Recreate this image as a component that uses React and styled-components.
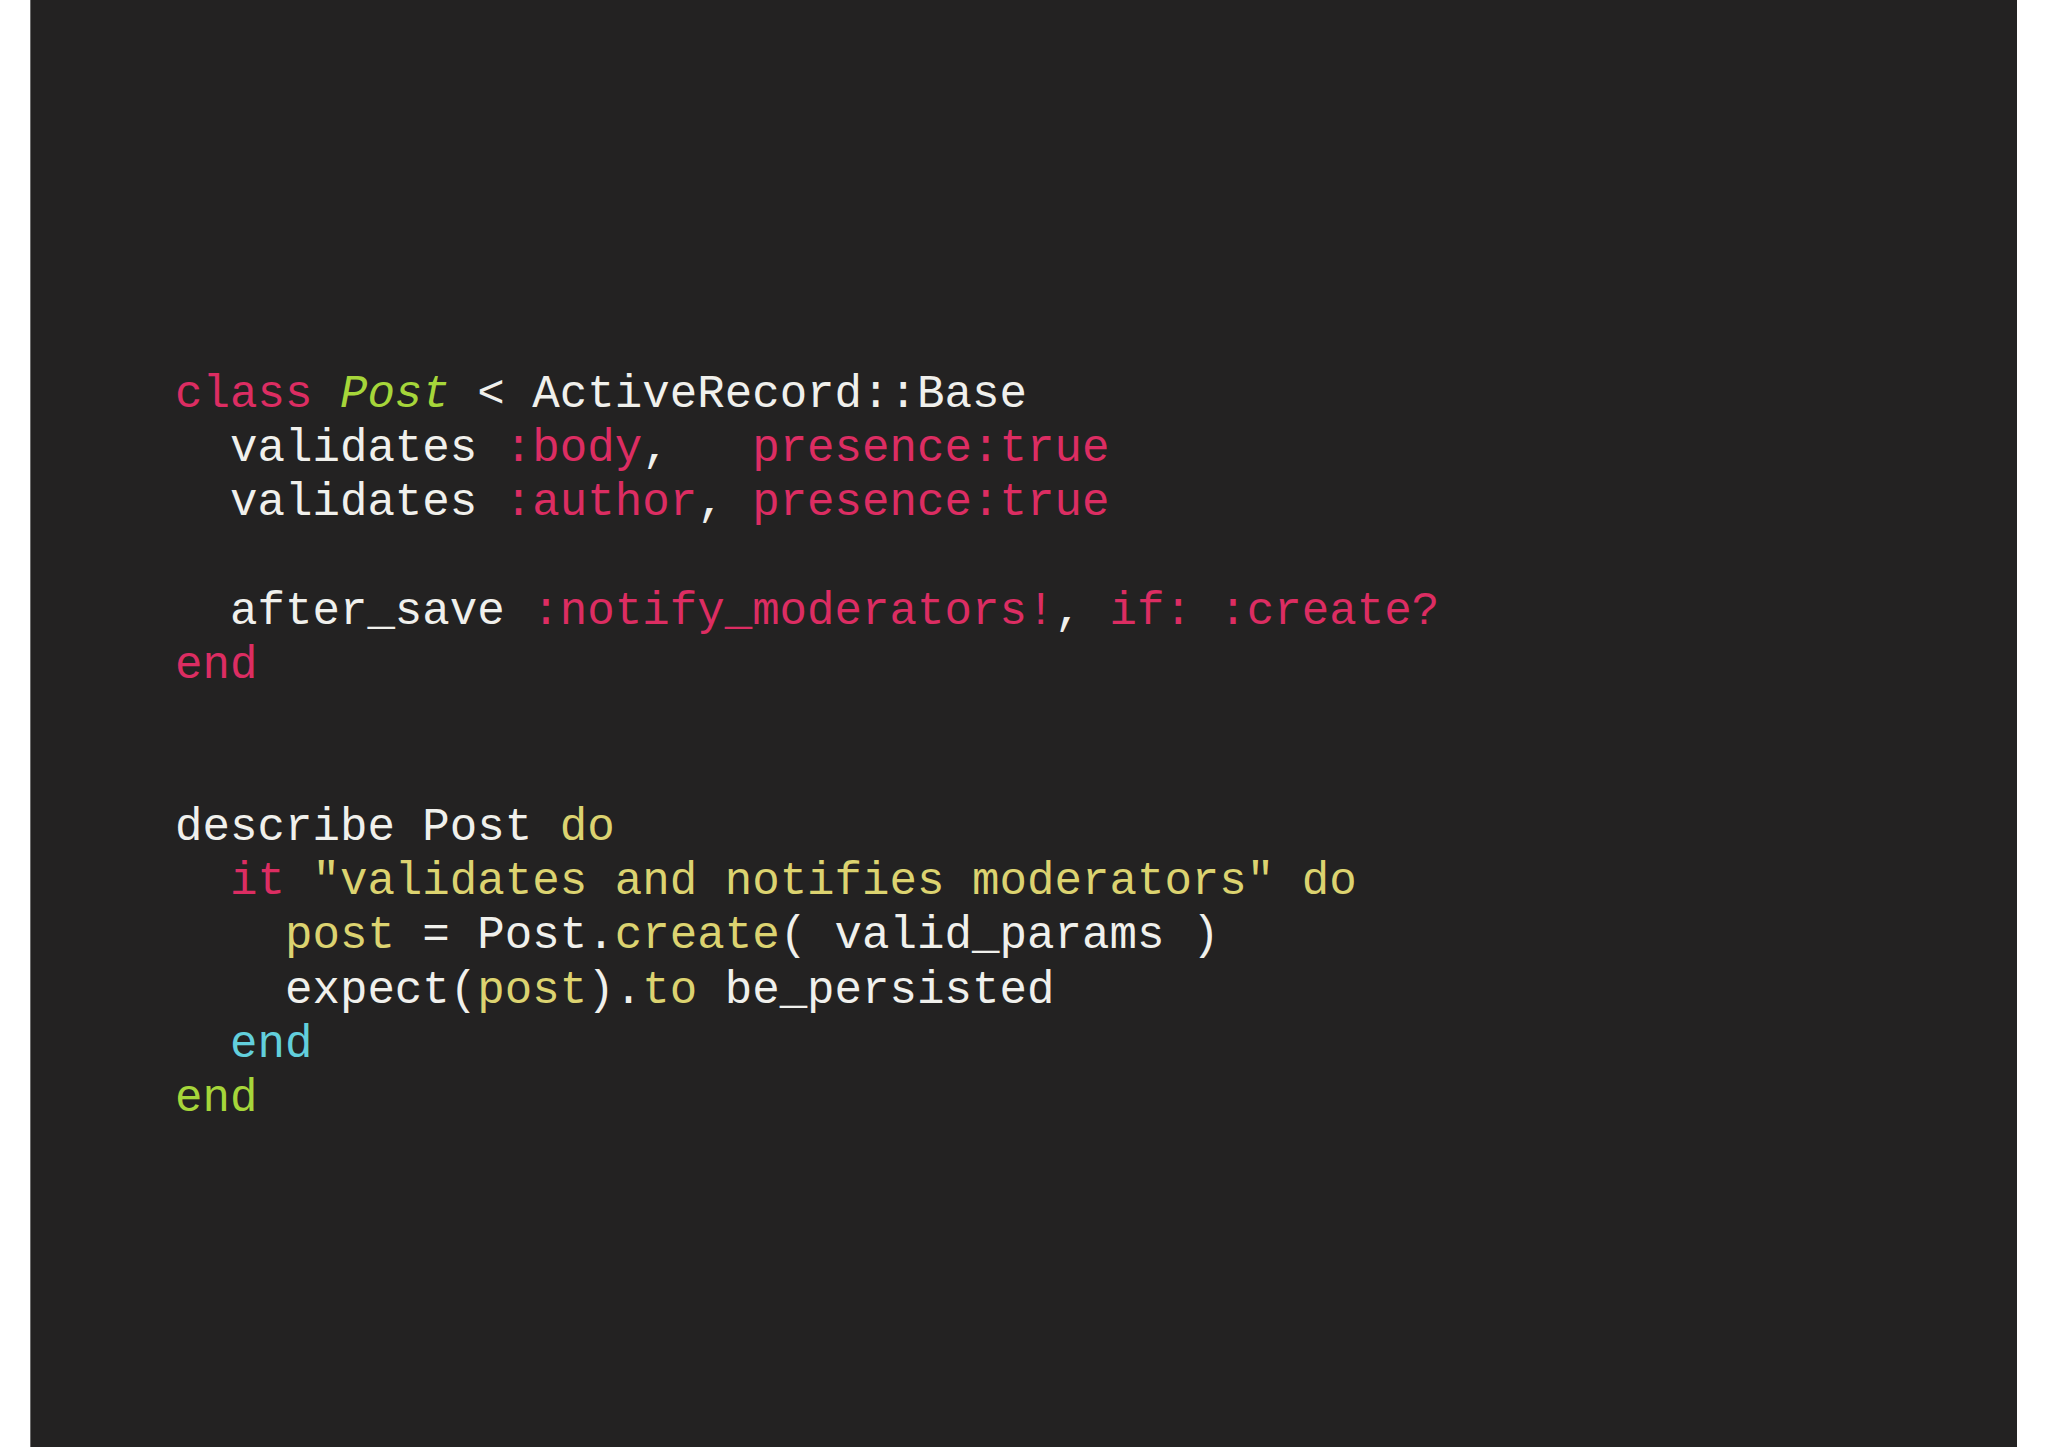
import React from "react";
import styled, { createGlobalStyle } from "styled-components";

const Global = createGlobalStyle`
  html, body { margin: 0; padding: 0; background: #ffffff; }
  #root { width: 2048px; height: 1448px; }
`;

const Page = styled.div`
  display: flex;
  width: 2048px;
  height: 1448px;
  background: #ffffff;
  padding-left: 30px;
  box-sizing: border-box;
`;

const Slide = styled.div`
  width: 1987px;
  height: 1447px;
  background: #232222;
  border-left: 1px solid #6a6a6a;
  box-sizing: border-box;
  padding: 368px 0 0 144px;
`;

const Code = styled.pre`
  margin: 0;
  font-family: "Courier New", "Nimbus Mono PS", "Nimbus Mono L", FreeMono, "Liberation Mono", monospace;
  font-size: 45.8px;
  line-height: 54.15px;
  color: #f0f0ec;
  white-space: pre;
`;

const Line = styled.div`
  height: 54.15px;
`;

const colors = {
  pink: "#dc2d62",
  green: "#a6d63a",
  yellow: "#dcd370",
  cyan: "#62cfdc",
  white: "#f0f0ec",
};

const Tok = styled.span`
  color: ${(p) => colors[p.$c] || colors.white};
  font-style: ${(p) => (p.$italic ? "italic" : "normal")};
`;

const lines = [
  [["class", "pink"], [" "], ["Post", "green", true], [" < ActiveRecord::Base"]],
  [["  validates "], [":body", "pink"], [",   "], ["presence:true", "pink"]],
  [["  validates "], [":author", "pink"], [", "], ["presence:true", "pink"]],
  [],
  [["  after_save "], [":notify_moderators!", "pink"], [", "], ["if:", "pink"], [" "], [":create?", "pink"]],
  [["end", "pink"]],
  [],
  [],
  [["describe Post "], ["do", "yellow"]],
  [["  "], ["it", "pink"], [" "], ['"validates and notifies moderators"', "yellow"], [" "], ["do", "yellow"]],
  [["    "], ["post", "yellow"], [" = Post."], ["create", "yellow"], ["( valid_params )"]],
  [["    expect("], ["post", "yellow"], [")."], ["to", "yellow"], [" be_persisted"]],
  [["  "], ["end", "cyan"]],
  [["end", "green"]],
];

export default function App() {
  return (
    <>
      <Global />
      <Page>
        <Slide>
          <Code>
            {lines.map((toks, i) => (
              <Line key={i}>
                {toks.map(([t, c, it], j) => (
                  <Tok key={j} $c={c} $italic={it}>
                    {t}
                  </Tok>
                ))}
              </Line>
            ))}
          </Code>
        </Slide>
      </Page>
    </>
  );
}
